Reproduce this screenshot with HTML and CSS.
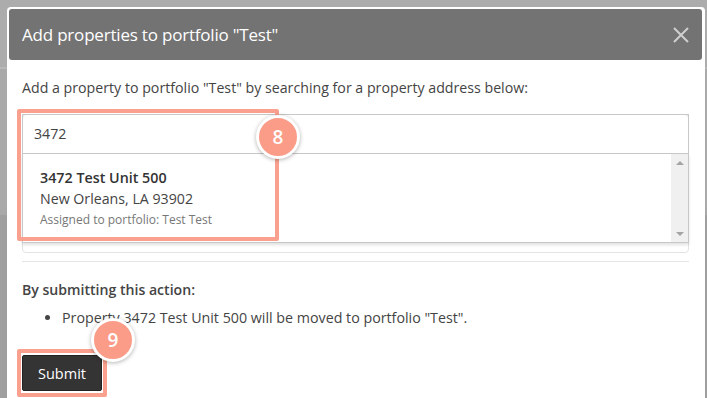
FILE: index.html
```html
<!DOCTYPE html>
<html>
<head>
<meta charset="utf-8">
<link rel="stylesheet" href="styles.css">
</head>
<body>
<div class="modal">
  <div class="modal-header">
    <h1 class="modal-title">Add properties to portfolio "Test"</h1>
    <svg class="close" width="16" height="16" viewBox="0 0 16 16"><path d="M1 1 L15 15 M15 1 L1 15" stroke="#cfcfcf" stroke-width="2" fill="none"/></svg>
  </div>
  <div class="modal-body">
    <p class="intro">Add a property to portfolio "Test" by searching for a property address below:</p>
    <div class="search-wrap">
      <div class="search-input">3472</div>
      <div class="dropdown">
        <div class="results">
          <div class="result">
            <div class="r-title">3472 Test Unit 500</div>
            <div class="r-city">New Orleans, LA 93902</div>
            <div class="r-note">Assigned to portfolio: Test Test</div>
          </div>
        </div>
        <div class="scrollbar">
          <span class="arrow up"></span>
          <span class="arrow down"></span>
        </div>
      </div>
      <div class="hl hl-search"></div>
      <div class="badge badge-8">8</div>
    </div>
    <hr class="divider">
    <p class="summary-title">By submitting this action:</p>
    <ul class="summary">
      <li>Property 3472 Test Unit 500 will be moved to portfolio "Test".</li>
    </ul>
    <div class="actions">
      <button class="btn-submit">Submit</button>
      <div class="hl hl-btn"></div>
      <div class="badge badge-9">9</div>
    </div>
  </div>
</div>
</body>
</html>
```

FILE: styles.css
```css
* { box-sizing: border-box; }
html, body { margin: 0; height: 100%; }
body {
  width: 707px;
  height: 398px;
  overflow: hidden;
  font-family: "Open Sans", "Noto Sans", sans-serif;
  background: linear-gradient(to bottom, #acacac 0, #acacac 67px, #b8b8b8 67px, #b8b8b8 69px, #a9a9a9 69px, #a9a9a9 215px, #9f9f9f 215px);
  padding: 7px 2px 0 7px;
}
.modal {
  background: #fff;
  height: 391px;
  padding: 2px;
  border-radius: 4px 4px 0 0;
  border-right: 1px solid #fff;
}
.modal-header {
  height: 51px;
  background: #737373;
  border-radius: 3px;
  display: flex;
  align-items: center;
  justify-content: space-between;
  padding: 0 13px 0 13px;
}
.modal-title {
  margin: 0;
  font-weight: 400;
  font-size: 17px;
  color: #fff;
  letter-spacing: -0.2px;
}
.modal-body {
  padding: 0 13px;
}
.intro {
  margin: 18px 0 0 0;
  font-size: 14.2px;
  line-height: 20px;
  color: #444;
}
.search-wrap {
  position: relative;
  margin-top: 16px;
  height: 139px;
  border: 1px solid #e3e3e3;
  border-radius: 4px;
}
.search-input {
  height: 40px;
  margin: -1px -1px 0 -1px;
  border: 1px solid #c8c8c8;
  padding: 0 11px;
  font-size: 14.2px;
  line-height: 38px;
  color: #444;
}
.dropdown {
  display: flex;
  height: 89px;
  margin: 0 -1px;
  border: 1px solid #c8c8c8;
  border-top: 0;
  background: #fff;
  box-shadow: 0 2px 3px rgba(0,0,0,0.12);
}
.results { flex: 1; padding: 13px 17px 0; }
.r-title { font-size: 14.3px; font-weight: 600; color: #333; line-height: 21px; }
.r-city { font-size: 14.2px; color: #444; line-height: 21px; }
.r-note { font-size: 12px; color: #777; line-height: 21px; }
.scrollbar {
  width: 17px;
  background: #f0f0f0;
  display: flex;
  flex-direction: column;
  justify-content: space-between;
  align-items: center;
  padding: 7px 0 6px;
}
.arrow { width: 0; height: 0; border-left: 4px solid transparent; border-right: 4px solid transparent; }
.arrow.up { border-bottom: 4px solid #a3a3a3; }
.arrow.down { border-top: 4px solid #a3a3a3; }
.hl {
  position: absolute;
  border: 4px solid #f9a08f;
  border-radius: 2px;
}
.hl-search { left: -6px; top: -6px; width: 262px; height: 132px; }
.badge {
  position: absolute;
  width: 44px;
  height: 44px;
  border-radius: 50%;
  background: #fa9c88;
  border: 3px solid #fff;
  box-shadow: 0 1px 4px rgba(0,0,0,0.3);
  color: #fff;
  font-size: 19px;
  font-weight: 600;
  display: flex;
  align-items: center;
  justify-content: center;
  font-family: "Open Sans", sans-serif;
}
.badge-8 { left: 233px; top: 0; }
.divider {
  margin: 8px 0 0 0;
  border: 0;
  border-top: 1px solid #e6e6e6;
}
.summary-title {
  margin: 18px 0 0 0;
  font-size: 14.1px;
  line-height: 20px;
  font-weight: 600;
  color: #444;
}
.summary {
  margin: 8px 0 0 0;
  padding-left: 40px;
  font-size: 14.25px;
  line-height: 20px;
  color: #444;
}
.actions { position: relative; margin-top: 27px; }
.btn-submit {
  display: block;
  width: 80px;
  height: 36px;
  background: #343434;
  border: 1px solid #222;
  border-radius: 2px;
  color: #fff;
  font-family: "Open Sans", sans-serif;
  font-size: 14.5px;
  padding: 0;
}
.hl-btn { left: -5px; top: -6px; width: 90px; height: 48px; }
.badge-9 { left: 69px; top: -37px; }
```
